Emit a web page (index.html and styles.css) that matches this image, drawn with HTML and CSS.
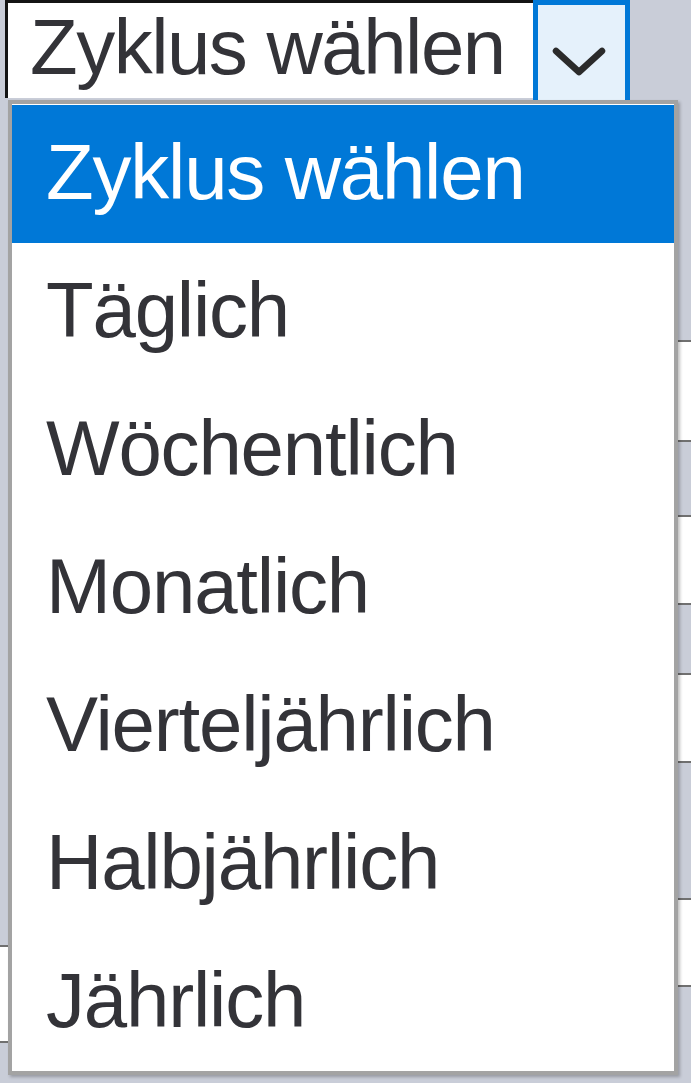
FILE: index.html
```html
<!DOCTYPE html>
<html lang="de">
<head>
    <meta charset="UTF-8">
    <meta name="viewport" content="width=device-width, initial-scale=1.0">
    <title>Zyklus wählen</title>
    <link rel="stylesheet" href="styles.css">
</head>
<body>
    <div class="screen">
        <div class="select-row">
            <div class="select">
                <span class="select-value">Zyklus wählen</span>
            </div>
            <div class="select-btn">
                <svg width="87" height="95" viewBox="0 0 87 95">
                    <polyline points="18,46 41,67 64,46" fill="none" stroke="#2b2b2b" stroke-width="6.5" stroke-linecap="round" stroke-linejoin="round"/>
                </svg>
            </div>
        </div>

        <!-- form behind the open list, only its edges show -->
        <div class="form">
            <div class="form-col">
                <div class="field field-left"></div>
            </div>
            <div class="form-col">
                <div class="field f1"></div>
                <div class="field f2"></div>
                <div class="field f3"></div>
                <div class="field f4"></div>
            </div>
        </div>

        <ul class="dropdown">
            <li class="option selected">Zyklus wählen</li>
            <li class="option">Täglich</li>
            <li class="option">Wöchentlich</li>
            <li class="option">Monatlich</li>
            <li class="option">Vierteljährlich</li>
            <li class="option">Halbjährlich</li>
            <li class="option">Jährlich</li>
        </ul>
    </div>
</body>
</html>
```

FILE: styles.css
```css
body {
    margin: 0;
    background-color: #c9cdd8;
    font-family: 'Liberation Sans', Arial, sans-serif;
    color: #333338;
}
.screen {
    position: relative;
    width: 691px;
    height: 1083px;
    overflow: hidden;
}
.select-row {
    display: flex;
    height: 100px;
    padding-left: 5px;
}
.select {
    box-sizing: border-box;
    width: 528px;
    height: 98px;
    background-color: #fff;
    border-top: 3px solid #141414;
    border-left: 3px solid #141414;
    padding-left: 22px;
}
.select-value {
    display: block;
    font-size: 78px;
    letter-spacing: -1.5px;
    line-height: 88px;
}
.select-btn {
    box-sizing: border-box;
    width: 97px;
    height: 100px;
    background-color: #e5f1fb;
    border: 5px solid #0078d7;
    border-bottom: none;
}
.select-btn svg {
    display: block;
}
.form {
    display: flex;
    justify-content: space-between;
}
.form-col {
    display: flex;
    flex-direction: column;
    width: 120px;
}
.field {
    box-sizing: border-box;
    background-color: #fff;
    border-top: 2px solid #707070;
    border-bottom: 2px solid #707070;
}
.field-left {
    margin-top: 845px;
    height: 98px;
}
.f1 {
    margin-top: 240px;
    height: 102px;
}
.f2 {
    margin-top: 73px;
    height: 90px;
}
.f3 {
    margin-top: 68px;
    height: 90px;
}
.f4 {
    margin-top: 135px;
    height: 89px;
}
.dropdown {
    position: absolute;
    top: 100px;
    left: 8px;
    box-sizing: border-box;
    width: 670px;
    margin: 0;
    padding: 1px 0 0;
    list-style: none;
    background-color: #fff;
    border: 4px solid #a3a3a3;
    box-shadow: 2px 2px 3px rgba(0, 0, 0, 0.25);
}
.option {
    box-sizing: border-box;
    height: 138px;
    padding: 0 0 4px 34px;
    font-size: 78px;
    letter-spacing: -1.2px;
    line-height: 134px;
    white-space: nowrap;
}
.option.selected {
    background-color: #0078d7;
    color: #fff;
}
```
